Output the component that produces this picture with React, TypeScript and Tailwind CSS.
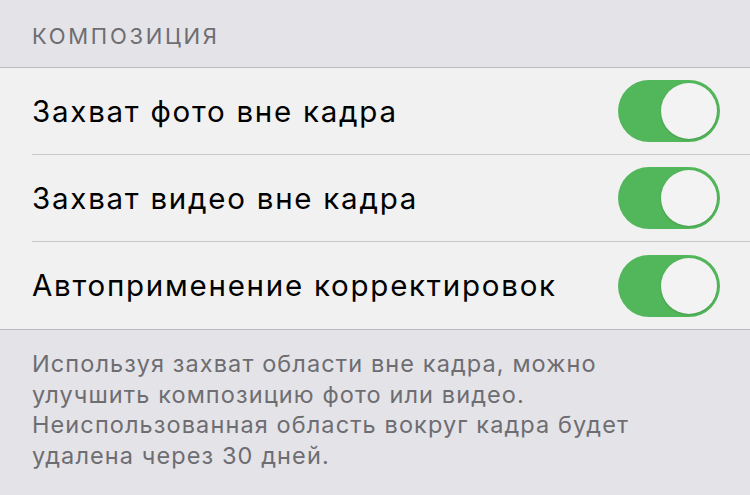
import React from "react";

const rows = [
  "Захват фото вне кадра",
  "Захват видео вне кадра",
  "Автоприменение корректировок",
];

function Toggle() {
  return (
    <div className="relative h-[62px] w-[102px] rounded-full bg-[#52b65a]">
      <div className="absolute right-[3px] top-[3px] h-[56px] w-[56px] rounded-full bg-[#f3f3f3] shadow-[0_1px_2px_rgba(0,0,0,0.15)]" />
    </div>
  );
}

export default function App() {
  return (
    <div
      className="h-[495px] w-[750px] overflow-hidden bg-[#e4e3e8]"
      style={{ fontFamily: "Inter, 'Noto Sans', sans-serif" }}
    >
      <div className="flex h-[67px] items-center px-[32px] pt-[6px] text-[22px] tracking-[2.7px] text-[#6d6d72]">
        КОМПОЗИЦИЯ
      </div>
      <div className="border-y border-[#bcbbc1] bg-[#f1f1f2]">
        {rows.map((label, i) => (
          <div key={label} className="pl-[32px]">
            <div
              className={
                "flex h-[87px] items-center justify-between pr-[30px] " +
                (i < rows.length - 1 ? "border-b border-[#c8c7cc]" : "")
              }
            >
              <span className="text-[29.5px] tracking-[1.75px] text-black">{label}</span>
              <Toggle />
            </div>
          </div>
        ))}
      </div>
      <div className="px-[32px] pt-[19px] text-[23.5px] leading-[30.5px] tracking-[1.1px] text-[#6d6d72]">
        Используя захват области вне кадра, можно
        <br />
        улучшить композицию фото или видео.
        <br />
        Неиспользованная область вокруг кадра будет
        <br />
        удалена через 30 дней.
      </div>
    </div>
  );
}
